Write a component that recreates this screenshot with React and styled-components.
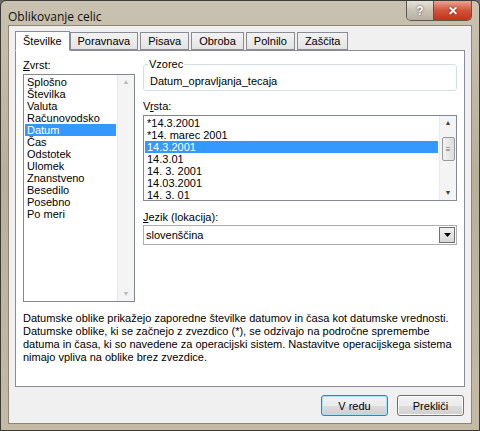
import React from 'react';
import styled, { createGlobalStyle } from 'styled-components';

const Global = createGlobalStyle`
  html, body { margin: 0; padding: 0; background: #6e6a60; }
  body { font-family: "Liberation Sans", Arial, sans-serif; font-size: 11px; color: #000; }
`;

const Frame = styled.div`
  width: 480px;
  height: 431px;
  box-sizing: border-box;
  border: 1px solid #3a3a36;
  border-radius: 6px 6px 0 0;
  background: linear-gradient(180deg, #c9c2b0 0%, #b9b09a 40%, #c4bba6 100%);
  padding: 0 7px 7px 7px;
  display: flex;
  flex-direction: column;
`;

const TitleBar = styled.div`
  height: 29px;
  display: flex;
  align-items: flex-start;
  justify-content: space-between;
`;

const Title = styled.div`
  padding-top: 7px;
  font-family: "Open Sans", sans-serif;
  font-size: 12px;
  color: #111;
`;

const Caps = styled.div`
  display: flex;
  border: 1px solid #5b574d;
  border-top: none;
  border-radius: 0 0 5px 5px;
  overflow: hidden;
`;

const CapBtn = styled.div`
  width: ${p => p.$w}px;
  height: 19px;
  display: flex;
  align-items: center;
  justify-content: center;
  color: #fff;
  font-weight: bold;
  font-size: 12px;
  text-shadow: 0 0 2px #333;
  background: ${p => p.$red
    ? 'linear-gradient(180deg, #e8a493 0%, #d0543a 50%, #c0341b 100%)'
    : 'linear-gradient(180deg, #e6e2d8 0%, #c9c3b4 50%, #b8b1a1 100%)'};
  border-left: ${p => (p.$red ? '1px solid #5b574d' : 'none')};
`;

const Body = styled.div`
  flex: 1;
  background: #f0f0f0;
  border: 1px solid #8b8677;
  padding: 5px 6px 7px 6px;
  display: flex;
  flex-direction: column;
`;

const Tabs = styled.div`
  display: flex;
  align-items: flex-end;
  height: 19px;
  position: relative;
  z-index: 1;
`;

const Tab = styled.div`
  box-sizing: border-box;
  height: ${p => (p.$active ? 20 : 18)}px;
  padding: 0 7px;
  margin-right: ${p => (p.$active ? 0 : 2)}px;
  display: flex;
  align-items: center;
  border: 1px solid #898c95;
  border-bottom: ${p => (p.$active ? '1px solid #fff' : '1px solid #898c95')};
  background: ${p => (p.$active ? '#fff' : 'linear-gradient(180deg, #f2f2f2, #e4e4e4)')};
  margin-bottom: ${p => (p.$active ? -1 : 0)}px;
`;

const Panel = styled.div`
  height: 337px;
  box-sizing: border-box;
  background: #fff;
  border: 1px solid #898c95;
  padding: 8px 7px 0 7px;
  display: flex;
  flex-direction: column;
`;

const Columns = styled.div`
  display: flex;
  gap: 8px;
`;

const Col = styled.div`
  display: flex;
  flex-direction: column;
  width: ${p => (p.$w ? `${p.$w}px` : 'auto')};
  flex: ${p => (p.$w ? 'none' : 1)};
`;

const Label = styled.div`
  height: 13px;
  line-height: 13px;
  margin-bottom: 2px;
  margin-top: ${p => p.$mt || 0}px;
`;

const ListBox = styled.div`
  box-sizing: border-box;
  height: ${p => p.$h}px;
  border: 1px solid #828790;
  display: flex;
  background: #fff;
`;

const Items = styled.div`
  flex: 1;
  padding: 1px;
  overflow: hidden;
`;

const Item = styled.div`
  height: 12px;
  line-height: 12px;
  padding-left: 2px;
  white-space: nowrap;
  background: ${p => (p.$sel ? '#3399ff' : 'transparent')};
  color: ${p => (p.$sel ? '#fff' : '#000')};
`;

const Scroll = styled.div`
  width: 16px;
  display: flex;
  flex-direction: column;
  align-items: center;
  justify-content: space-between;
  background: #f4f4f4;
  border-left: 1px solid #eaeaea;
  color: ${p => (p.$dim ? '#b8b8b8' : '#444')};
  font-size: 7px;
`;

const Arrow = styled.div`
  height: 14px;
  line-height: 14px;
`;

const Thumb = styled.div`
  width: 13px;
  height: 24px;
  box-sizing: border-box;
  border: 1px solid #9a9a9a;
  border-radius: 2px;
  background: linear-gradient(90deg, #f2f2f2, #dcdcdc);
  display: flex;
  align-items: center;
  justify-content: center;
  font-size: 8px;
  color: #666;
  margin-top: -18px;
`;

const Group = styled.fieldset`
  margin: 0 0 9px 0;
  height: 32px;
  box-sizing: border-box;
  border: 1px solid #d5dfe5;
  border-radius: 3px;
  padding: 0 0 0 6px;
  legend { padding: 0 1px; margin-left: -2px; line-height: 10px; }
`;

const Sample = styled.div`
  padding-top: 6px;
`;

const Select = styled.div`
  box-sizing: border-box;
  height: 20px;
  border: 1px solid #abadb3;
  display: flex;
  align-items: center;
  padding-left: 2px;
  margin-top: -1px;
`;

const SelText = styled.div` flex: 1; `;

const DropBtn = styled.div`
  width: 16px;
  height: 16px;
  margin-right: 1px;
  border: 1px solid #707070;
  box-sizing: border-box;
  background: linear-gradient(180deg, #f2f2f2, #d6d6d6);
  display: flex;
  align-items: center;
  justify-content: center;
`;

const Desc = styled.p`
  margin: 10px 0 0 0;
  line-height: 13px;
`;

const Footer = styled.div`
  display: flex;
  justify-content: flex-end;
  gap: 9px;
  margin-top: 8px;
  padding-right: 1px;
`;

const Button = styled.div`
  width: 67px;
  height: 21px;
  box-sizing: border-box;
  border: 1px solid ${p => (p.$def ? '#3c7fb1' : '#707070')};
  border-radius: 3px;
  background: linear-gradient(180deg, #f2f2f2 0%, #ebebeb 50%, #dddddd 51%, #cfcfcf 100%);
  box-shadow: ${p => (p.$def ? 'inset 0 0 0 1px #a6e3fb' : 'inset 0 0 0 1px #fcfcfc')};
  display: flex;
  align-items: center;
  justify-content: center;
`;

const cats = ['Splošno', 'Številka', 'Valuta', 'Računovodsko', 'Datum', 'Čas', 'Odstotek', 'Ulomek', 'Znanstveno', 'Besedilo', 'Posebno', 'Po meri'];
const types = ['*14.3.2001', '*14. marec 2001', '14.3.2001', '14.3.01', '14. 3. 2001', '14.03.2001', '14. 3. 01'];

export default function App() {
  return (
    <>
      <Global />
      <Frame>
        <TitleBar>
          <Title>Oblikovanje celic</Title>
          <Caps>
            <CapBtn $w={26}>?</CapBtn>
            <CapBtn $w={37} $red>✕</CapBtn>
          </Caps>
        </TitleBar>
        <Body>
          <Tabs>
            {['Številke', 'Poravnava', 'Pisava', 'Obroba', 'Polnilo', 'Zaščita'].map((t, i) => (
              <Tab key={t} $active={i === 0}>{t}</Tab>
            ))}
          </Tabs>
          <Panel>
            <Columns>
              <Col $w={112}>
                <Label><u>Z</u>vrst:</Label>
                <ListBox $h={228}>
                  <Items>
                    {cats.map(c => <Item key={c} $sel={c === 'Datum'}>{c}</Item>)}
                  </Items>
                  <Scroll $dim><Arrow>▲</Arrow><Arrow>▼</Arrow></Scroll>
                </ListBox>
              </Col>
              <Col>
                <Group>
                  <legend>Vzorec</legend>
                  <Sample>Datum_opravljanja_tecaja</Sample>
                </Group>
                <Label>V<u>r</u>sta:</Label>
                <ListBox $h={86}>
                  <Items>
                    {types.map(t => <Item key={t} $sel={t === '14.3.2001'}>{t}</Item>)}
                  </Items>
                  <Scroll><Arrow>▲</Arrow><Thumb>≡</Thumb><Arrow>▼</Arrow></Scroll>
                </ListBox>
                <Label $mt={10}><u>J</u>ezik (lokacija):</Label>
                <Select>
                  <SelText>slovenščina</SelText>
                  <DropBtn>
                    <svg width="7" height="4" viewBox="0 0 7 4"><path d="M0 0h7L3.5 4z" fill="#000" /></svg>
                  </DropBtn>
                </Select>
              </Col>
            </Columns>
            <Desc>
              Datumske oblike prikažejo zaporedne številke datumov in časa kot datumske vrednosti. Datumske oblike, ki se začnejo z zvezdico (*), se odzivajo na področne spremembe datuma in časa, ki so navedene za operacijski sistem. Nastavitve operacijskega sistema nimajo vpliva na oblike brez zvezdice.
            </Desc>
          </Panel>
          <Footer>
            <Button $def>V redu</Button>
            <Button>Prekliči</Button>
          </Footer>
        </Body>
      </Frame>
    </>
  );
}
